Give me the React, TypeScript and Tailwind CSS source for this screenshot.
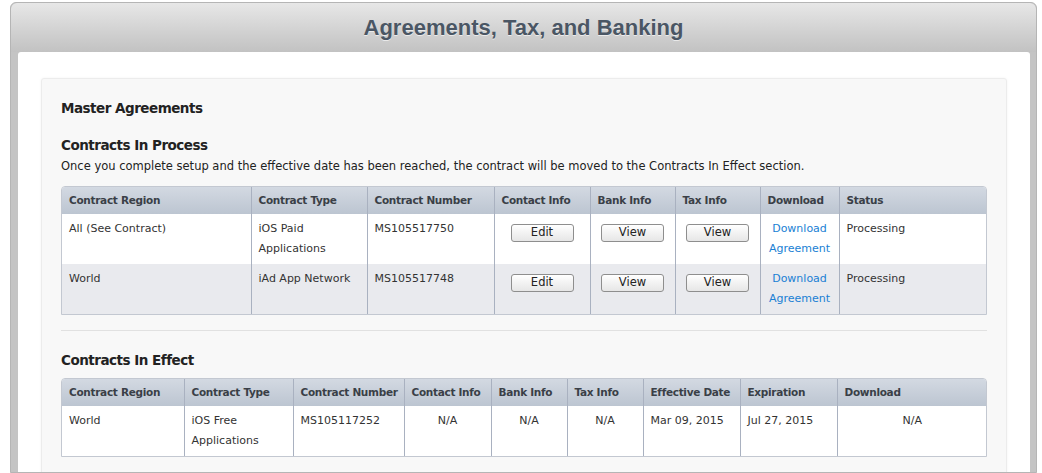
import React from "react";

const body = { fontFamily: '"DejaVu Sans", "Lucida Grande", sans-serif' };

function Btn({ label }: { label: string }) {
  return (
    <div className="mx-auto mt-[5px] flex h-[18px] w-[63px] items-center justify-center rounded-[3px] border border-[#8e8e8e] bg-gradient-to-b from-white to-[#e6e6e6] text-[11.5px] leading-none text-[#222]">
      {label}
    </div>
  );
}

const th =
  "border-l border-[#a9b1c0] first:border-l-0 px-[7px] h-[27px] whitespace-nowrap text-left align-middle font-bold text-[10.5px] tracking-[-0.3px] text-[#3a3f47]";
const td = "border-l border-[#a9b1c0] first:border-l-0 px-[7px] pt-[5px] pb-[5px] align-top text-[11px] leading-[20px] text-[#333]";

function Link() {
  return (
    <div className="text-center text-[#1a7fd4] leading-[20px]">
      Download
      <br />
      Agreement
    </div>
  );
}

const h2 = "text-[13.5px] tracking-[-0.5px] font-bold leading-[18px] text-[#222]";

export default function App() {
  const t1w = [189, 116, 127, 96, 85, 85, 79, 149];
  const t2w = [122, 109, 111, 87, 76, 76, 97, 97, 150];
  return (
    <div className="min-h-[473px] w-[1042px] bg-white pt-[2px]" style={body}>
      <div className="ml-[10px] w-[1027px] rounded-t-[6px] border border-[#b5b5b5] bg-[#c4c4c4] pl-[7px] pr-[6px] h-[471px] overflow-hidden">
        <div className="-ml-[7px] -mr-[6px] flex h-[49px] items-center justify-center rounded-t-[6px] bg-gradient-to-b from-[#e7e7e7] to-[#c2c2c2]">
          <h1
            className="text-[22px] font-bold text-[#4a5664] [text-shadow:0_1px_0_rgba(255,255,255,0.6)]"
            style={{ fontFamily: '"Liberation Sans", Arial, sans-serif' }}
          >
            Agreements, Tax, and Banking
          </h1>
        </div>
        <div className="h-full rounded-t-[3px] bg-white pl-[23px] pr-[23px] pt-[26px]">
          <div className="h-full rounded-[3px] border border-[#ececec] bg-[#f8f8f8] px-[19px] pt-[20px] shadow-[0_0_3px_rgba(0,0,0,0.05)]">
            <h2 className={h2}>Master Agreements</h2>
            <h2 className={h2 + " mt-[19px]"}>Contracts In Process</h2>
            <p className="mt-[4px] text-[11.5px] leading-[16px] text-[#222]">
              Once you complete setup and the effective date has been reached, the contract will be moved to the Contracts In Effect section.
            </p>
            <div className="mt-[12px] w-[926px] overflow-hidden rounded-t-[4px] border border-[#c3c8d1]">
              <table className="w-full table-fixed border-collapse">
                <colgroup>
                  {t1w.map((w, i) => (
                    <col key={i} style={{ width: w }} />
                  ))}
                </colgroup>
                <thead>
                  <tr className="bg-gradient-to-b from-[#d3d9e2] to-[#bcc5d1]">
                    {["Contract Region", "Contract Type", "Contract Number", "Contact Info", "Bank Info", "Tax Info", "Download", "Status"].map((h) => (
                      <th key={h} className={th}>
                        {h}
                      </th>
                    ))}
                  </tr>
                </thead>
                <tbody>
                  <tr className="h-[50px] bg-white">
                    <td className={td}>All (See Contract)</td>
                    <td className={td}>
                      iOS Paid
                      <br />
                      Applications
                    </td>
                    <td className={td}>MS105517750</td>
                    <td className={td}>
                      <Btn label="Edit" />
                    </td>
                    <td className={td}>
                      <Btn label="View" />
                    </td>
                    <td className={td}>
                      <Btn label="View" />
                    </td>
                    <td className={td}>
                      <Link />
                    </td>
                    <td className={td}>Processing</td>
                  </tr>
                  <tr className="h-[50px] bg-[#e9eaee]">
                    <td className={td}>World</td>
                    <td className={td}>iAd App Network</td>
                    <td className={td}>MS105517748</td>
                    <td className={td}>
                      <Btn label="Edit" />
                    </td>
                    <td className={td}>
                      <Btn label="View" />
                    </td>
                    <td className={td}>
                      <Btn label="View" />
                    </td>
                    <td className={td}>
                      <Link />
                    </td>
                    <td className={td}>Processing</td>
                  </tr>
                </tbody>
              </table>
            </div>
            <div className="mt-[15px] h-px w-[926px] bg-[#e1e1e1]" />
            <h2 className={h2 + " mt-[20px]"}>Contracts In Effect</h2>
            <div className="mt-[9px] w-[926px] overflow-hidden rounded-t-[4px] border border-[#c3c8d1]">
              <table className="w-full table-fixed border-collapse">
                <colgroup>
                  {t2w.map((w, i) => (
                    <col key={i} style={{ width: w }} />
                  ))}
                </colgroup>
                <thead>
                  <tr className="bg-gradient-to-b from-[#d3d9e2] to-[#bcc5d1]">
                    {["Contract Region", "Contract Type", "Contract Number", "Contact Info", "Bank Info", "Tax Info", "Effective Date", "Expiration", "Download"].map((h) => (
                      <th key={h} className={th}>
                        {h}
                      </th>
                    ))}
                  </tr>
                </thead>
                <tbody>
                  <tr className="h-[50px] bg-white">
                    <td className={td}>World</td>
                    <td className={td}>
                      iOS Free
                      <br />
                      Applications
                    </td>
                    <td className={td}>MS105117252</td>
                    <td className={td + " text-center"}>N/A</td>
                    <td className={td + " text-center"}>N/A</td>
                    <td className={td + " text-center"}>N/A</td>
                    <td className={td}>Mar 09, 2015</td>
                    <td className={td}>Jul 27, 2015</td>
                    <td className={td + " text-center"}>N/A</td>
                  </tr>
                </tbody>
              </table>
            </div>
          </div>
        </div>
      </div>
    </div>
  );
}
